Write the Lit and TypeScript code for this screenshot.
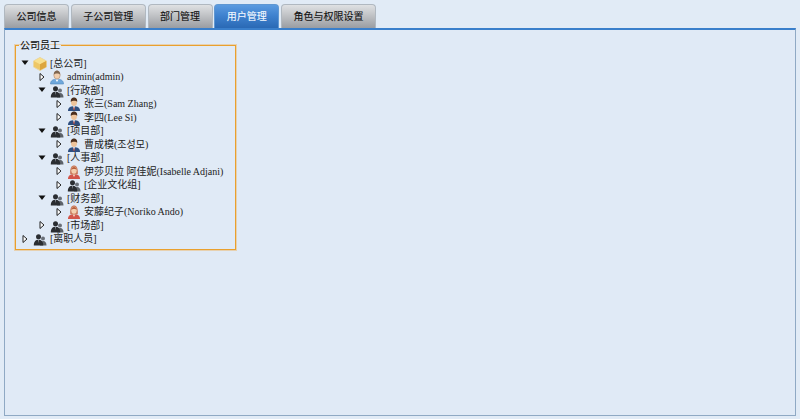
import { LitElement, html, css, svg } from "lit";
import { customElement } from "lit/decorators.js";

type Icon = "box" | "admin" | "group" | "man" | "woman";
interface Row { level: number; open: boolean; icon: Icon; label: string; }

const rows: Row[] = [
  { level: 0, open: true, icon: "box", label: "[总公司]" },
  { level: 1, open: false, icon: "admin", label: "admin(admin)" },
  { level: 1, open: true, icon: "group", label: "[行政部]" },
  { level: 2, open: false, icon: "man", label: "张三(Sam Zhang)" },
  { level: 2, open: false, icon: "man", label: "李四(Lee Si)" },
  { level: 1, open: true, icon: "group", label: "[项目部]" },
  { level: 2, open: false, icon: "man", label: "曹成模(조성모)" },
  { level: 1, open: true, icon: "group", label: "[人事部]" },
  { level: 2, open: false, icon: "woman", label: "伊莎贝拉 阿佳妮(Isabelle Adjani)" },
  { level: 2, open: false, icon: "group", label: "[企业文化组]" },
  { level: 1, open: true, icon: "group", label: "[财务部]" },
  { level: 2, open: false, icon: "woman", label: "安藤纪子(Noriko Ando)" },
  { level: 1, open: false, icon: "group", label: "[市场部]" },
  { level: 0, open: false, icon: "group", label: "[离职人员]" },
];

const tabs = ["公司信息", "子公司管理", "部门管理", "用户管理", "角色与权限设置"];

const icons: Record<Icon, unknown> = {
  box: svg`<path d="M8 1.500 14.500 5v6L8 14.500 1.500 11V5Z" fill="#eec766" stroke="#e8d6a4"/><path d="M1.800 5 8 8.200 14.200 5 8 1.800Z" fill="#f8e08e"/><path d="M8 8.200v6L14.200 11V5Z" fill="#dca63e"/>`,
  admin: svg`<path d="M1.500 15c0-3.500 2.500-4.800 6.500-4.800s6.500 1.300 6.500 4.800Z" fill="#6fa8dc" stroke="#4f86bd" stroke-width=".6"/><path d="M6.500 10.500 8 13l1.500-2.500Z" fill="#fff"/><ellipse cx="8" cy="6" rx="3.200" ry="4" fill="#f2cfae" stroke="#a98a70" stroke-width=".6"/><path d="M4.800 5.500C5 2.500 6.500 1.500 8 1.500s3 1 3.200 4C10 4 6 4 4.800 5.500Z" fill="#7d654f"/>`,
  group: svg`<circle cx="11" cy="7.500" r="2" fill="#6a7078"/><path d="M8 14.500c0-3 1.200-4.500 3.200-4.500s3.300 1.500 3.300 4.500Z" fill="#5c6269"/><circle cx="6.500" cy="5.800" r="2.500" fill="#2a2d31"/><path d="M1.800 14.500c0-4 1.900-5.700 4.700-5.700s4.700 1.700 4.700 5.700Z" fill="#2a2d31"/><path d="M6 9 6.500 12 7 9Z" fill="#9aa0a8"/>`,
  man: svg`<path d="M2 15c0-3.500 2.300-4.800 6-4.800s6 1.300 6 4.800Z" fill="#2f4f80"/><path d="M6.800 10.200 8 14l1.200-3.800Z" fill="#e9eef4"/><path d="M7.700 11h.6l.4 2.500-.7.800-.7-.8Z" fill="#b33a2d"/><ellipse cx="8" cy="6.200" rx="3" ry="3.800" fill="#eec39a"/><path d="M4.800 6C4.500 2.800 6.300 1.600 8 1.600s3.500 1.200 3.200 4.400C10.500 4.400 6 4.400 4.800 6Z" fill="#4b2e1c"/>`,
  woman: svg`<path d="M2 15c0-3.500 2.300-4.800 6-4.800s6 1.300 6 4.800Z" fill="#d2554a"/><path d="M6.500 10.200 8 13l1.500-2.800Z" fill="#f6d9c2"/><path d="M4.200 10C3.800 4 5.500 1.500 8 1.500s4.200 2.500 3.800 8.500l-1.500.6H5.700Z" fill="#c9795a"/><ellipse cx="8" cy="6.300" rx="2.700" ry="3.500" fill="#f3cfae"/><path d="M5.200 6C5.500 3.700 6.500 3 8 3s2.500.7 2.800 3C9.800 4.800 6.300 4.800 5.200 6Z" fill="#b8613f"/>`,
};

@customElement("app-root")
export class AppRoot extends LitElement {
  static styles = css`
    :host {
      display: block;
      width: 800px;
      height: 419px;
      box-sizing: border-box;
      padding: 4px 4px 3px;
      background: #e1ebf6;
      font-family: "Liberation Serif", "Noto Sans CJK SC", serif;
      font-size: 10px;
      color: #222;
      overflow: hidden;
    }
    .page { display: flex; flex-direction: column; height: 100%; }
    .tabs { display: flex; gap: 1.75px; height: 24px; flex: none; }
    .tab {
      box-sizing: border-box;
      display: flex;
      align-items: center;
      justify-content: center;
      padding: 0 11.5px 2px;
      height: 24px;
      border: 1px solid #b0b8c0;
      border-bottom: none;
      border-radius: 4px 4px 0 0;
      background: linear-gradient(#dfe1e3 0%, #c4c6c9 40%, #9a9da2 100%);
      font-family: "Noto Sans CJK SC", sans-serif;
      font-size: 10px;
      color: #111;
      -webkit-text-stroke: 0.1px currentColor;
    }
    .tab.active {
      background: linear-gradient(#5b9be0 0%, #3f82cf 45%, #2a69b5 100%);
      border-color: #5f97d2;
      color: #f4f9ff;
    }
    .panel {
      flex: 1;
      box-sizing: border-box;
      border-top: 2px solid #3a7fcb;
      border-left: 1px solid #8fa9c4;
      border-right: 1px solid #8fa9c4;
      border-bottom: 1px solid #8fa9c4;
      padding: 9px 10px 0;
      background: #e0eaf6;
    }
    fieldset {
      box-sizing: border-box;
      width: 221px;
      height: 211px;
      margin: 0;
      padding: 5.5px 0 0 0;
      border: 1px solid #e9a02e;
      box-shadow: 0 0 0 1px rgba(240, 180, 90, 0.45);
      min-width: 0;
    }
    legend {
      padding: 0 1px;
      margin-left: 3px;
      font-family: "Noto Sans CJK SC", sans-serif;
      font-size: 10px;
      line-height: 12px;
      color: #111;
      -webkit-text-stroke: 0.1px currentColor;
    }
    .row {
      display: flex;
      align-items: center;
      height: 13.5px;
      white-space: nowrap;
      color: #222;
    }
    .tog { width: 10px; height: 8px; flex: none; margin-right: 1px; }
    .icon { width: 16px; height: 16px; flex: none; margin-right: 2px; margin-top: 1px; }
    .label { line-height: 13px; }
  `;

  private toggle(open: boolean) {
    return open
      ? html`<svg class="tog" viewBox="0 0 10 8"><path d="M0.500 1.500h7L4 6Z" fill="#111"/></svg>`
      : html`<svg class="tog" viewBox="0 0 10 8"><path d="M2 .5 6 4 2 7.500Z" fill="#fff" stroke="#222" stroke-width="1"/></svg>`;
  }

  render() {
    return html`<div class="page">
      <div class="tabs">
        ${tabs.map((t, i) => html`<div class="tab ${i === 3 ? "active" : ""}">${t}</div>`)}
      </div>
      <div class="panel">
        <fieldset>
          <legend>公司员工</legend>
          ${rows.map(
            (r) => html`<div class="row" style="padding-left:${5 + r.level * 17}px">
              ${this.toggle(r.open)}
              <svg class="icon" viewBox="0 0 16 16">${icons[r.icon]}</svg>
              <span class="label">${r.label}</span>
            </div>`
          )}
        </fieldset>
      </div>
    </div>`;
  }
}
